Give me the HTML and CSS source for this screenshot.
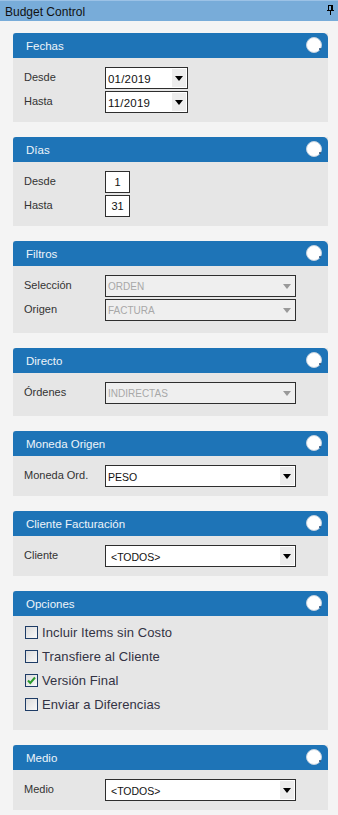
FILE: index.html
```html
<!DOCTYPE html>
<html>
<head>
<meta charset="utf-8">
<link rel="stylesheet" href="styles.css">
</head>
<body>
<div class="titlebar">
  <span class="title">Budget Control</span>
  <svg class="pin" width="7" height="10" viewBox="0 0 7 10"><rect x="1.5" y="0.5" width="4" height="5" fill="none" stroke="#000"/><rect x="0" y="5" width="7" height="1" fill="#000"/><rect x="3" y="6" width="1" height="4" fill="#000"/><rect x="4" y="1" width="1" height="4" fill="#000"/></svg>
</div>
<div class="panels">

  <section class="panel">
    <header class="ph"><span>Fechas</span><i class="knob"></i></header>
    <div class="pb">
      <div class="row"><label>Desde</label><div class="sel sel-date"><span class="val val-num">01/2019</span><b class="arr"></b></div></div>
      <div class="row"><label>Hasta</label><div class="sel sel-date"><span class="val val-num">11/2019</span><b class="arr"></b></div></div>
    </div>
  </section>

  <section class="panel">
    <header class="ph"><span>Días</span><i class="knob"></i></header>
    <div class="pb">
      <div class="row"><label>Desde</label><div class="num">1</div></div>
      <div class="row"><label>Hasta</label><div class="num">31</div></div>
    </div>
  </section>

  <section class="panel">
    <header class="ph"><span>Filtros</span><i class="knob"></i></header>
    <div class="pb pb-tall">
      <div class="row"><label>Selección</label><div class="sel sel-wide dis"><span class="val">ORDEN</span><b class="arr"></b></div></div>
      <div class="row"><label>Origen</label><div class="sel sel-wide dis"><span class="val">FACTURA</span><b class="arr"></b></div></div>
    </div>
  </section>

  <section class="panel">
    <header class="ph"><span>Directo</span><i class="knob"></i></header>
    <div class="pb pb-tall">
      <div class="row"><label>Órdenes</label><div class="sel sel-wide dis"><span class="val">INDIRECTAS</span><b class="arr"></b></div></div>
    </div>
  </section>

  <section class="panel">
    <header class="ph"><span>Moneda Origen</span><i class="knob"></i></header>
    <div class="pb">
      <div class="row"><label>Moneda Ord.</label><div class="sel sel-wide"><span class="val">PESO</span><b class="arr"></b></div></div>
    </div>
  </section>

  <section class="panel">
    <header class="ph"><span>Cliente Facturación</span><i class="knob"></i></header>
    <div class="pb">
      <div class="row"><label>Cliente</label><div class="sel sel-wide"><span class="val val-ind">&lt;TODOS&gt;</span><b class="arr"></b></div></div>
    </div>
  </section>

  <section class="panel">
    <header class="ph"><span>Opciones</span><i class="knob"></i></header>
    <div class="pb pb-checks">
      <div class="chk"><i class="box"></i><span>Incluir Items sin Costo</span></div>
      <div class="chk"><i class="box"></i><span>Transfiere al Cliente</span></div>
      <div class="chk"><i class="box"><svg width="11" height="11" viewBox="0 0 11 11"><path d="M2 5.5 L4.3 8 L9 2.5" fill="none" stroke="#2c9a2c" stroke-width="2"/></svg></i><span>Versión Final</span></div>
      <div class="chk"><i class="box"></i><span>Enviar a Diferencias</span></div>
    </div>
  </section>

  <section class="panel">
    <header class="ph"><span>Medio</span><i class="knob"></i></header>
    <div class="pb">
      <div class="row"><label>Medio</label><div class="sel sel-wide"><span class="val val-ind">&lt;TODOS&gt;</span><b class="arr"></b></div></div>
    </div>
  </section>

</div>
</body>
</html>
```
FILE: styles.css
```css
html, body {
  margin: 0;
  padding: 0;
}
body {
  width: 338px;
  height: 815px;
  overflow: hidden;
  background: #f4f4f4;
  font-family: "Liberation Sans", Arial, sans-serif;
  color: #333;
}
.titlebar {
  height: 20px;
  border-top: 1px solid #9cc2e6;
  background: #78acd9;
  display: flex;
  align-items: center;
  justify-content: space-between;
  padding: 0 4px 0 5px;
}
.title {
  font-size: 12px;
  color: #111;
  line-height: 20px;
  padding-top: 1px;
}
.pin {
  display: block;
  margin-top: -2px;
}
.panels {
  padding: 12px 10px 0 13px;
  display: flex;
  flex-direction: column;
  gap: 15px;
}
.panel {
  background: #e6e6e6;
}
.ph {
  height: 25px;
  background: #1e74b7;
  border-radius: 3px 5px 0 0;
  display: flex;
  align-items: center;
  justify-content: space-between;
  padding: 0 6px 0 13px;
  color: #eef4fa;
  font-size: 11.5px;
}
.ph span {
  padding-top: 1px;
}
.knob {
  width: 14px;
  height: 14px;
  border-radius: 50%;
  background: #fff;
  border: 1px solid #c4d2df;
  position: relative;
  margin-top: -1px;
}
.knob::after {
  content: "";
  position: absolute;
  right: 0;
  bottom: 2px;
  width: 2px;
  height: 2px;
  background: #2a4a70;
  border-radius: 1px;
}
.pb {
  padding: 9px 0 9px 11px;
  display: flex;
  flex-direction: column;
  gap: 2px;
}
.pb-tall {
  padding-bottom: 12px;
}
.row {
  display: flex;
  align-items: center;
  height: 22px;
}
.row label {
  width: 81px;
  font-size: 11px;
  color: #333;
  margin-top: -3px;
}
.sel {
  box-sizing: border-box;
  height: 22px;
  border: 1px solid #2e2e2e;
  background: #fff;
  display: flex;
  align-items: center;
  justify-content: space-between;
  padding: 1px 1px 1px 2px;
}
.sel-date {
  width: 83px;
}
.sel-wide {
  width: 191px;
}
.val {
  font-size: 10.5px;
  color: #111;
  padding-top: 1px;
}
.val-num {
  font-size: 11.5px;
  letter-spacing: 0.2px;
}
.val-ind {
  padding-left: 3px;
}
.arr {
  align-self: stretch;
  width: 14px;
  background: #ededed;
  position: relative;
}
.arr::after {
  content: "";
  position: absolute;
  left: 3px;
  top: 7px;
  border-left: 4px solid transparent;
  border-right: 4px solid transparent;
  border-top: 5px solid #000;
}
.dis {
  background: #efefef;
}
.dis .val {
  color: #a8a8a8;
  font-size: 10px;
}
.dis .arr {
  background: transparent;
}
.dis .arr::after {
  border-top-color: #999;
}
.num {
  box-sizing: border-box;
  width: 25px;
  height: 22px;
  border: 1px solid #2e2e2e;
  background: #fff;
  font-size: 11px;
  color: #111;
  text-align: center;
  line-height: 20px;
}
.pb-checks {
  padding: 10px 0 19px 12px;
  gap: 11px;
}
.chk {
  display: flex;
  align-items: center;
  gap: 4px;
  height: 13px;
}
.box {
  box-sizing: border-box;
  width: 13px;
  height: 13px;
  border: 1px solid #1e3c66;
  background: linear-gradient(135deg, #dcdcdc, #f8f8f8);
  display: flex;
  align-items: center;
  justify-content: center;
}
.box svg {
  display: block;
}
.chk span {
  font-size: 13px;
  color: #333344;
  letter-spacing: 0.1px;
}
```
